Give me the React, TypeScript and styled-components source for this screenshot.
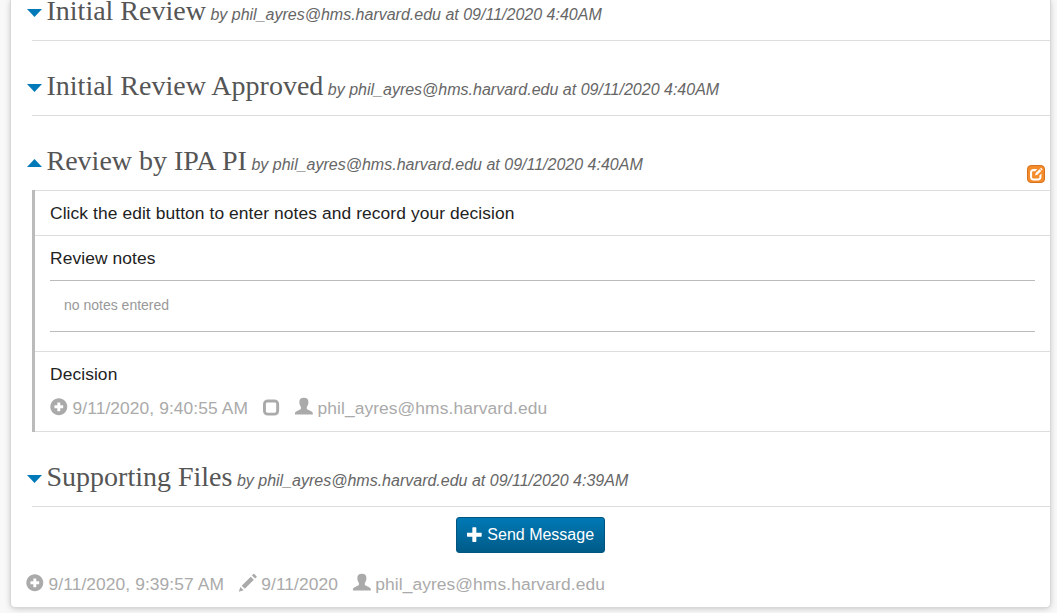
import React from 'react';
import styled, { createGlobalStyle } from 'styled-components';

const Global = createGlobalStyle`
  * { box-sizing: border-box; }
  html, body { margin: 0; background: #f8f8f8; }
  body { overflow: hidden; font-family: "Liberation Sans", Arial, sans-serif; font-size: 17.4px; letter-spacing: 0.087px; color: #222; }
`;

const Page = styled.main`
  height: 613px;
  padding: 0 7px 6px 11px;
  overflow: hidden;
`;

const Card = styled.article`
  height: 607px;
  background: #fff;
  border-radius: 0 0 4px 4px;
  box-shadow: 0 0 0 1px #d8d8d8, 0 1px 6px rgba(0, 0, 0, 0.25);
`;

const Section = styled.section<{ $height: number }>`
  height: ${p => p.$height}px;
  margin-left: 21px;
  border-bottom: 1px solid #ddd;
  display: flex;
  justify-content: space-between;
  align-items: flex-end;
`;

const Heading = styled.h3`
  margin: 0 0 8px -5px;
  display: flex;
  align-items: baseline;
  font-weight: 400;
  line-height: 34px;
  letter-spacing: 0;
  color: #555;
  white-space: nowrap;
`;

const Caret = styled.svg`
  width: 15px;
  height: 8px;
  margin-right: 4.5px;
  align-self: center;
  fill: #0079b8;
`;

const Title = styled.span`
  font-family: "Liberation Serif", "Times New Roman", serif;
  font-size: 28px;
`;

const Byline = styled.em`
  margin-left: 4.5px;
  font-size: 16px;
  color: #666;
`;

const EditButton = styled.button`
  width: 18px;
  height: 18px;
  margin: 0 5px 7px 0;
  padding: 0;
  border: 1px solid #d8721f;
  border-radius: 4px;
  background: #f58c2c;
  display: grid;
  place-items: center;
  color: #fff;
`;

const Panel = styled.div`
  height: 242px;
  margin: -1px 0 0 21px;
  border-left: 3px solid #bbb;
`;

const Item = styled.div<{ $height: number }>`
  height: ${p => p.$height}px;
  padding: 0 15px;
  border-top: 1px solid #ddd;
  &:last-child { border-bottom: 1px solid #ddd; }
`;

const Label = styled.div`
  height: 44px;
  line-height: 45px;
`;

const Notes = styled.div`
  height: 52px;
  padding-left: 14px;
  border: solid #bbb;
  border-width: 1px 0;
  line-height: 49px;
  font-size: 14px;
  letter-spacing: 0;
  color: #999;
`;

const Meta = styled.div<{ $top: number; $left: number }>`
  display: flex;
  padding: ${p => p.$top}px 0 0 ${p => p.$left}px;
  line-height: 25px;
  color: #aaa;
  white-space: nowrap;
`;

const Stamp = styled.span`
  display: flex;
  align-items: flex-start;
  gap: 4.9px;
  margin-right: 14.7px;

  svg { margin-top: 2px; }
`;

const Glyph = styled.svg`
  flex: none;
  fill: currentColor;
`;

const Actions = styled.div`
  padding-top: 10px;
  display: flex;
  justify-content: center;
`;

const SendButton = styled.button`
  width: 149px;
  height: 36px;
  padding: 0 0 1px;
  display: flex;
  justify-content: center;
  align-items: center;
  gap: 4.4px;
  border: 1px solid #005580;
  border-radius: 3px;
  background: linear-gradient(#0079b5, #005b88);
  color: #fff;
  font: 16px "Liberation Sans", Arial, sans-serif;
  letter-spacing: 0;
  white-space: nowrap;

  svg { margin-bottom: 2px; }
`;

const paths = {
  plusSign: 'M600 1177q117 0 224 -45.5t184.5 -123t123 -184.5t45.5 -224t-45.5 -224t-123 -184.5t-184.5 -123t-224 -45.5t-224 45.5t-184.5 123t-123 184.5t-45.5 224t45.5 224t123 184.5t184.5 123t224 45.5zM675 900h-150q-10 0 -17.5 -7.5t-7.5 -17.5v-175h-175q-10 0 -17.5 -7.5t-7.5 -17.5v-150q0 -10 7.5 -17.5t17.5 -7.5h175v-175q0 -10 7.5 -17.5t17.5 -7.5h150q10 0 17.5 7.5t7.5 17.5v175h175q10 0 17.5 7.5t7.5 17.5v150q0 10 -7.5 17.5t-17.5 7.5h-175v175q0 10 -7.5 17.5t-17.5 7.5z',
  plus: 'M450 1100h200q21 0 35.5 -14.5t14.5 -35.5v-350h350q21 0 35.5 -14.5t14.5 -35.5v-200q0 -21 -14.5 -35.5t-35.5 -14.5h-350v-350q0 -21 -14.5 -35.5t-35.5 -14.5h-200q-21 0 -35.5 14.5t-14.5 35.5v350h-350q-21 0 -35.5 14.5t-14.5 35.5v200q0 21 14.5 35.5t35.5 14.5h350v350q0 21 14.5 35.5t35.5 14.5z',
  square: 'M350 1100h400q165 0 257.5 -92.5t92.5 -257.5v-400q0 -165 -92.5 -257.5t-257.5 -92.5h-400q-165 0 -257.5 92.5t-92.5 257.5v400q0 165 92.5 257.5t257.5 92.5zM300 900q-41 0 -70.5 -29.5t-29.5 -70.5v-500q0 -41 29.5 -70.5t70.5 -29.5h500q41 0 70.5 29.5t29.5 70.5v500q0 41 -29.5 70.5t-70.5 29.5z',
  pencil: 'M1011 1210q19 0 33 -13l153 -153q13 -14 13 -33t-13 -33l-99 -92l-214 214l95 96q13 14 32 14zM1013 800l-615 -614l-214 214l614 614zM317 96l-333 -112l110 335z',
  user: 'M605 1210q170 0 245 -85t65 -255q-10 -170 -110 -290v-90q0 -55 60 -80l265 -125q85 -40 85 -130v-75h-1220v75q0 90 85 130l265 125q60 25 60 80v90q-100 120 -110 290q-10 170 65 255t245 85z',
  edit: 'M350 1100h350l-200 -200h-200q-41 0 -70.5 -29.5t-29.5 -70.5v-500q0 -41 29.5 -70.5t70.5 -29.5h500q41 0 70.5 29.5t29.5 70.5v180l200 190v-320q0 -165 -92.5 -257.5t-257.5 -92.5h-400q-165 0 -257.5 92.5t-92.5 257.5v400q0 165 92.5 257.5t257.5 92.5zM1080 1190l110 -110q25 -25 0 -50l-60 -60l-160 160l60 60q25 25 50 0zM920 1080l160 -160l-370 -370l-220 -60l60 220z',
};

function Icon({ name, size = 17.6 }: { name: keyof typeof paths; size?: number }) {
  return (
    <Glyph width={size} height={size} viewBox="0 0 1200 1200" overflow="visible" aria-hidden="true">
      <path transform="matrix(1 0 0 -1 0 1200)" fillRule="evenodd" d={paths[name]} />
    </Glyph>
  );
}

function Step({ title, time = '4:40AM', height = 75, open = false }: { title: string; time?: string; height?: number; open?: boolean }) {
  return (
    <Section $height={height}>
      <Heading>
        <Caret viewBox="0 0 15 8"><path d={open ? 'M0 8L7.5 0L15 8Z' : 'M0 0H15L7.5 8Z'} /></Caret>
        <Title>{title}</Title>
        <Byline>by phil_ayres@hms.harvard.edu at 09/11/2020 {time}</Byline>
      </Heading>
      {open && <EditButton aria-label="Edit"><Icon name="edit" size={12.5} /></EditButton>}
    </Section>
  );
}

export default function App() {
  return (
    <>
      <Global />
      <Page>
        <Card>
          <Step title="Initial Review" height={41} />
          <Step title="Initial Review Approved" />
          <Step title="Review by IPA PI" open />
          <Panel>
            <Item $height={45}><Label>Click the edit button to enter notes and record your decision</Label></Item>
            <Item $height={116}>
              <Label>Review notes</Label>
              <Notes>no notes entered</Notes>
            </Item>
            <Item $height={81}>
              <Label>Decision</Label>
              <Meta $top={0} $left={0}>
                <Stamp><Icon name="plusSign" />9/11/2020, 9:40:55 AM</Stamp>
                <Stamp><Icon name="square" /></Stamp>
                <Stamp><Icon name="user" />phil_ayres@hms.harvard.edu</Stamp>
              </Meta>
            </Item>
          </Panel>
          <Step title="Supporting Files" time="4:39AM" />
          <Actions><SendButton><Icon name="plus" size={16} />Send Message</SendButton></Actions>
          <Meta $top={19} $left={15}>
            <Stamp><Icon name="plusSign" />9/11/2020, 9:39:57 AM</Stamp>
            <Stamp><Icon name="pencil" />9/11/2020</Stamp>
            <Stamp><Icon name="user" />phil_ayres@hms.harvard.edu</Stamp>
          </Meta>
        </Card>
      </Page>
    </>
  );
}
